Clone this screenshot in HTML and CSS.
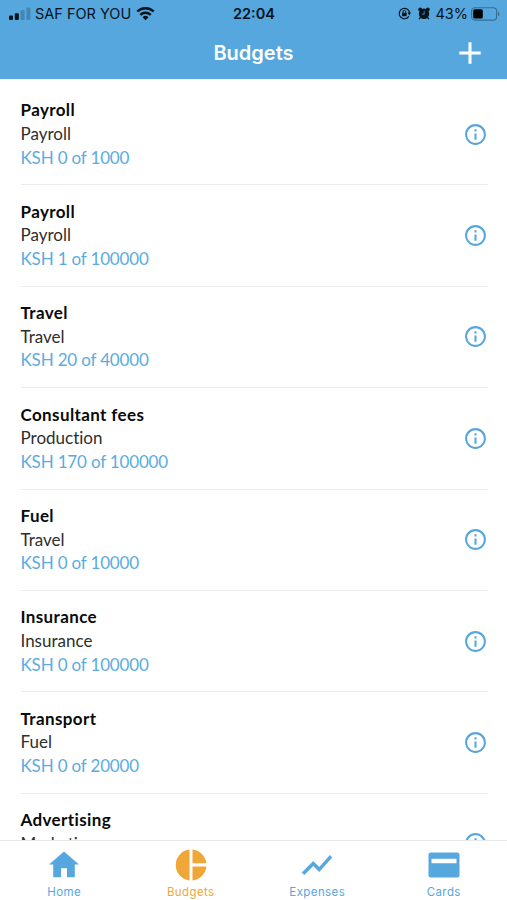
FILE: index.html
```
<!DOCTYPE html>
<html lang="en">
<head>
  <meta charset="UTF-8" />
  <meta name="viewport" content="width=device-width, initial-scale=1" />
  <title>Budgets</title>
  <link rel="stylesheet" href="styles.css">
</head>
<body>

<svg class="defs" width="0" height="0">
  <symbol id="info" viewBox="0 0 24 24">
    <path d="M11 7h2v2h-2zm0 4h2v6h-2zm1-9C6.48 2 2 6.48 2 12s4.48 10 10 10 10-4.48 10-10S17.52 2 12 2zm0 18c-4.41 0-8-3.59-8-8s3.59-8 8-8 8 3.59 8 8-3.59 8-8 8z"/>
  </symbol>
</svg>

<div class="app">
  <header class="header">
    <div class="status-bar">
      <div class="status-left">
        <svg class="signal" width="22" height="14" viewBox="0 0 22 14">
          <rect x="0" y="8.6" width="4" height="4.4" rx="1"/>
          <rect x="5.8" y="6.3" width="4" height="6.7" rx="1"/>
          <rect x="11.6" y="3.3" width="4" height="9.7" rx="1" opacity="0.22"/>
          <rect x="17.4" y="0.4" width="4" height="12.6" rx="1" opacity="0.22"/>
        </svg>
        <span class="carrier">SAF FOR YOU</span>
        <svg class="wifi" width="19" height="14" viewBox="0 0 19 14">
          <g fill="none" stroke="#08131c" stroke-width="2.4">
            <path d="M1.3 4.5a11.8 11.8 0 0 1 16.4 0"/>
            <path d="M4.3 7.9a7.5 7.5 0 0 1 10.4 0"/>
          </g>
          <path d="M9.5 13.3L6.5 10.3a4.3 4.3 0 0 1 6 0z"/>
        </svg>
      </div>
      <div class="clock">22:04</div>
      <div class="status-right">
        <svg class="rotation" width="13" height="13" viewBox="0 0 13 13">
          <path d="M10.8 9.4A5.2 5.2 0 1 1 11.6 6" fill="none" stroke="#08131c" stroke-width="1.2"/>
          <path d="M9.6 5.6h3.4l-1.7 2.8z"/>
          <rect x="4" y="5.8" width="4.6" height="3.4" rx="0.5"/>
          <path d="M4.9 6V4.8a1.4 1.4 0 0 1 2.8 0V6" fill="none" stroke="#08131c" stroke-width="0.9"/>
        </svg>
        <svg class="alarm" width="12" height="13" viewBox="0 0 12 13">
          <circle cx="6" cy="6.8" r="5.2"/>
          <circle cx="2.2" cy="2.4" r="1.9"/>
          <circle cx="9.8" cy="2.4" r="1.9"/>
          <path d="M2.4 10.4L1.2 12.2M9.6 10.4L10.8 12.2" stroke="#08131c" stroke-width="1.4"/>
          <path d="M6.2 4.2V7.2H4.2" fill="none" stroke="#55a7de" stroke-width="0.8"/>
        </svg>
        <span class="percent">43%</span>
        <svg class="battery" width="29" height="14" viewBox="0 0 29 14">
          <rect x="0.6" y="0.7" width="25" height="12.4" rx="3.4" fill="none" stroke="#08131c" stroke-opacity="0.4" stroke-width="1.1"/>
          <rect x="2.2" y="2.3" width="9.6" height="9.2" rx="1.6" fill="#000"/>
          <path d="M27 4.8v4.4c1.9-.6 1.9-3.8 0-4.4z" opacity="0.4"/>
        </svg>
      </div>
    </div>
    <div class="nav-bar">
      <h1 class="title">Budgets</h1>
      <svg class="add" width="22" height="22" viewBox="0 0 22 22">
        <path d="M11 0.3v21.4M0.3 11h21.4" stroke="#fff" stroke-width="3"/>
      </svg>
    </div>
  </header>

  <main class="list">
    <div class="budget">
      <div class="budget-text">
        <div class="name">Payroll</div>
        <div class="category">Payroll</div>
        <div class="amount">KSH 0 of 1000</div>
      </div>
      <svg class="info"><use href="#info"/></svg>
    </div>
    <div class="budget">
      <div class="budget-text">
        <div class="name">Payroll</div>
        <div class="category">Payroll</div>
        <div class="amount">KSH 1 of 100000</div>
      </div>
      <svg class="info"><use href="#info"/></svg>
    </div>
    <div class="budget">
      <div class="budget-text">
        <div class="name">Travel</div>
        <div class="category">Travel</div>
        <div class="amount">KSH 20 of 40000</div>
      </div>
      <svg class="info"><use href="#info"/></svg>
    </div>
    <div class="budget">
      <div class="budget-text">
        <div class="name">Consultant fees</div>
        <div class="category">Production</div>
        <div class="amount">KSH 170 of 100000</div>
      </div>
      <svg class="info"><use href="#info"/></svg>
    </div>
    <div class="budget">
      <div class="budget-text">
        <div class="name">Fuel</div>
        <div class="category">Travel</div>
        <div class="amount">KSH 0 of 10000</div>
      </div>
      <svg class="info"><use href="#info"/></svg>
    </div>
    <div class="budget">
      <div class="budget-text">
        <div class="name">Insurance</div>
        <div class="category">Insurance</div>
        <div class="amount">KSH 0 of 100000</div>
      </div>
      <svg class="info"><use href="#info"/></svg>
    </div>
    <div class="budget">
      <div class="budget-text">
        <div class="name">Transport</div>
        <div class="category">Fuel</div>
        <div class="amount">KSH 0 of 20000</div>
      </div>
      <svg class="info"><use href="#info"/></svg>
    </div>
    <div class="budget">
      <div class="budget-text">
        <div class="name">Advertising</div>
        <div class="category">Marketing</div>
        <div class="amount">KSH 0 of 10000</div>
      </div>
      <svg class="info"><use href="#info"/></svg>
    </div>
  </main>

  <nav class="tabs">
    <a class="tab">
      <svg width="36" height="36" viewBox="0 0 24 24"><path d="M10 20.2v-6h4v6h5.2v-8.6H22L12 3 2 11.6h2.8v8.6z"/></svg>
      <span>Home</span>
    </a>
    <a class="tab active">
      <svg width="36" height="36" viewBox="0 0 36 36">
        <path d="M16.5 2.6A15.5 15.5 0 0 0 16.5 33.4z"/>
        <path d="M19.5 2.6A15.5 15.5 0 0 1 33.4 16.3H19.5z"/>
        <path d="M19.5 19.5H33.4A15.5 15.5 0 0 1 19.5 33.4z"/>
      </svg>
      <span>Budgets</span>
    </a>
    <a class="tab">
      <svg width="36" height="36" viewBox="0 0 24 24"><path d="M3.5 18.49l6-6.01 4 4L22 6.92l-1.41-1.41-7.09 7.97-4-4L2 16.99z" stroke="currentColor" stroke-width="0.3"/></svg>
      <span>Expenses</span>
    </a>
    <a class="tab">
      <svg width="36" height="36" viewBox="0 0 36 36">
        <path fill-rule="evenodd" d="M5 5.5h26a2.5 2.5 0 0 1 2.5 2.5v20a2.5 2.5 0 0 1-2.5 2.5H5a2.5 2.5 0 0 1-2.5-2.5V8a2.5 2.5 0 0 1 2.5-2.5zM5.500 11.8v4.500h25v-4.500z"/>
      </svg>
      <span>Cards</span>
    </a>
  </nav>
</div>

</body>
</html>
```
FILE: styles.css
```
body {
  margin: 0;
  background: #fff;
  font-family: Lato, "Liberation Sans", sans-serif;
}

.defs {
  display: block;
}

.app {
  display: flex;
  flex-direction: column;
  height: 900px;
  overflow: hidden;
}

.header {
  flex: none;
  height: 79px;
  background: #55a7de;
  color: #08131c;
}

/* status bar */
.status-bar {
  display: grid;
  grid-template-columns: 1fr auto 1fr;
  align-items: center;
  height: 27px;
  padding: 0 8px 0 9px;
  font-family: Inter, "Liberation Sans", sans-serif;
  font-size: 14.5px;
  line-height: 27px;
}

.status-bar svg {
  fill: #08131c;
}

.status-left,
.status-right {
  display: flex;
  align-items: center;
}

.status-right {
  justify-content: flex-end;
  margin-right: -1px;
}

.carrier {
  margin: 0 5px 0 4px;
  white-space: nowrap;
}

.clock {
  font-weight: 600;
}

.alarm {
  margin: 0 5px 0 7px;
}

.percent {
  margin-right: 3px;
}

.nav-bar {
  display: grid;
  grid-template-columns: 1fr auto 1fr;
  align-items: center;
  height: 51px;
  padding: 0 26px;
}

.title {
  grid-column: 2;
  margin: 0;
  color: #fff;
  font-family: Inter, "Liberation Sans", sans-serif;
  font-size: 20px;
  font-weight: 600;
}

.add {
  justify-self: end;
}

/* budget list */
.list {
  flex: 1;
  min-height: 0;
  padding: 5px 19px 0 20.5px;
  overflow: hidden;
}

.budget {
  display: flex;
  align-items: center;
  justify-content: space-between;
  box-sizing: border-box;
  height: 101.4px;
  border-bottom: 1px solid #ebebeb;
  font-size: 17px;
  line-height: 23.6px;
  font-variant-ligatures: none;
}

.budget-text {
  margin-bottom: 0.8px;
}

.name {
  color: #0a0a0a;
  font-weight: 700;
  letter-spacing: 0.38px;
}

.category {
  color: #2e2e2e;
}

.amount {
  color: #5aace0;
  letter-spacing: -0.17px;
}

.info {
  width: 25px;
  height: 25px;
  fill: #55a7de;
}

/* bottom tabs */
.tabs {
  flex: none;
  display: flex;
  box-sizing: border-box;
  height: 60px;
  padding-left: 1px;
  border-top: 1px solid #e8e8e8;
}

.tab {
  flex: 1;
  display: flex;
  flex-direction: column;
  align-items: center;
  padding-top: 6px;
  color: #55a7de;
  font-family: Inter, "Liberation Sans", sans-serif;
  font-size: 11.5px;
  line-height: 18px;
  letter-spacing: 0.4px;
}

.tab svg {
  flex: none;
  fill: currentColor;
}

.tab.active {
  color: #f0a738;
}
```
